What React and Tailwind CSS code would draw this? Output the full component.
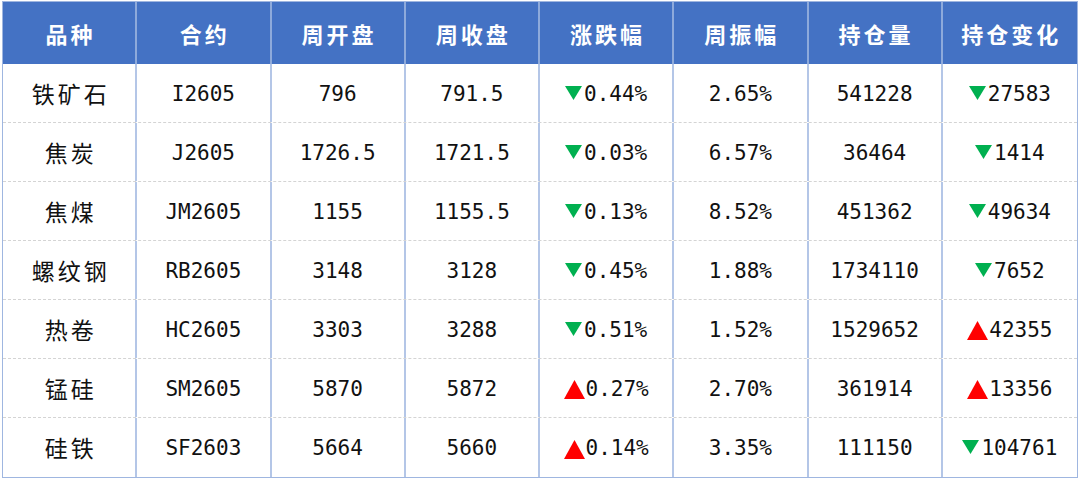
import React from "react";

const headers = ["品种", "合约", "周开盘", "周收盘", "涨跌幅", "周振幅", "持仓量", "持仓变化"];

const rows = [
  ["铁矿石", "I2605", "796", "791.5", ["d", "0.44%"], "2.65%", "541228", ["d", "27583"]],
  ["焦炭", "J2605", "1726.5", "1721.5", ["d", "0.03%"], "6.57%", "36464", ["d", "1414"]],
  ["焦煤", "JM2605", "1155", "1155.5", ["d", "0.13%"], "8.52%", "451362", ["d", "49634"]],
  ["螺纹钢", "RB2605", "3148", "3128", ["d", "0.45%"], "1.88%", "1734110", ["d", "7652"]],
  ["热卷", "HC2605", "3303", "3288", ["d", "0.51%"], "1.52%", "1529652", ["u", "42355"]],
  ["锰硅", "SM2605", "5870", "5872", ["u", "0.27%"], "2.70%", "361914", ["u", "13356"]],
  ["硅铁", "SF2603", "5664", "5660", ["u", "0.14%"], "3.35%", "111150", ["d", "104761"]],
];

function Down() {
  return (
    <svg width="17" height="14" viewBox="0 0 17 14" className="mr-[2px] mb-[4px]">
      <polygon points="0,0 17,0 8.5,14" fill="#00b050" />
    </svg>
  );
}

function Up() {
  return (
    <svg width="21" height="19" viewBox="0 0 21 19" className="mr-[1px]">
      <polygon points="10.5,0 21,19 0,19" fill="#ff0000" />
    </svg>
  );
}

export default function App() {
  return (
    <div className="w-[1080px] h-[486px] bg-white pl-[2px] pt-[1px]">
      <div className="w-[1076px] border border-[#9fb6e0]">
        <div className="grid grid-cols-8 bg-[#4472c4] h-[62px]">
          {headers.map((h, i) => (
            <div
              key={i}
              className={`flex items-center justify-center text-white font-bold text-[22px] tracking-[3px] pl-[3px] ${
                i < 7 ? "border-r-2 border-[#8eaadb]" : ""
              }`}
              style={{ fontFamily: '"Noto Sans CJK SC", sans-serif' }}
            >
              {h}
            </div>
          ))}
        </div>
        {rows.map((r, ri) => (
          <div
            key={ri}
            className={`grid grid-cols-8 h-[59px] ${ri < 6 ? "border-b border-dashed border-[#d4d4d4]" : ""}`}
          >
            {r.map((c, ci) => (
              <div
                key={ci}
                className={`flex items-center justify-center text-[#111] ${
                  ci < 7 ? "border-r-2 border-[#b4c6e7]" : ""
                } ${ci === 0 ? "text-[23px] tracking-[3px] pl-[3px]" : "text-[21px] pt-[3px]"}`}
                style={{
                  fontFamily:
                    ci === 0
                      ? '"Noto Sans CJK SC", sans-serif'
                      : '"DejaVu Sans Mono", "Noto Sans CJK SC", monospace',
                }}
              >
                {Array.isArray(c) ? (
                  <>
                    {c[0] === "d" ? <Down /> : <Up />}
                    <span>{c[1]}</span>
                  </>
                ) : (
                  c
                )}
              </div>
            ))}
          </div>
        ))}
      </div>
    </div>
  );
}
